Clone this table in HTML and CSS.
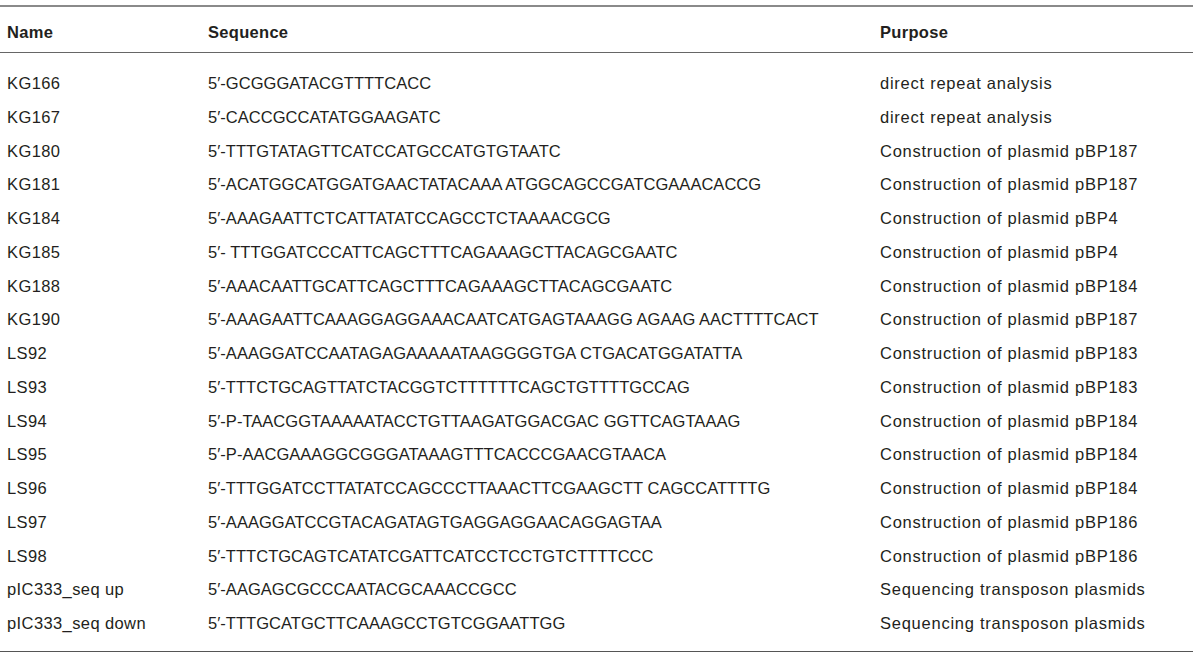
FILE: index.html
```html
<!DOCTYPE html>
<html>
<head>
<meta charset="utf-8">
<link rel="stylesheet" href="styles.css">
</head>
<body>
<div class="wrap">
<table class="primers">
<thead>
<tr><th class="c-name">Name</th><th class="c-seq">Sequence</th><th class="c-purpose">Purpose</th></tr>
</thead>
<tbody>
<tr class="first"><td>KG166</td><td>5′-GCGGGATACGTTTTCACC</td><td>direct repeat analysis</td></tr>
<tr><td>KG167</td><td>5′-CACCGCCATATGGAAGATC</td><td>direct repeat analysis</td></tr>
<tr><td>KG180</td><td>5′-TTTGTATAGTTCATCCATGCCATGTGTAATC</td><td>Construction of plasmid pBP187</td></tr>
<tr><td>KG181</td><td>5′-ACATGGCATGGATGAACTATACAAA ATGGCAGCCGATCGAAACACCG</td><td>Construction of plasmid pBP187</td></tr>
<tr><td>KG184</td><td>5′-AAAGAATTCTCATTATATCCAGCCTCTAAAACGCG</td><td>Construction of plasmid pBP4</td></tr>
<tr><td>KG185</td><td>5′- TTTGGATCCCATTCAGCTTTCAGAAAGCTTACAGCGAATC</td><td>Construction of plasmid pBP4</td></tr>
<tr><td>KG188</td><td>5′-AAACAATTGCATTCAGCTTTCAGAAAGCTTACAGCGAATC</td><td>Construction of plasmid pBP184</td></tr>
<tr><td>KG190</td><td>5′-AAAGAATTCAAAGGAGGAAACAATCATGAGTAAAGG AGAAG AACTTTTCACT</td><td>Construction of plasmid pBP187</td></tr>
<tr><td>LS92</td><td>5′-AAAGGATCCAATAGAGAAAAATAAGGGGTGA CTGACATGGATATTA</td><td>Construction of plasmid pBP183</td></tr>
<tr><td>LS93</td><td>5′-TTTCTGCAGTTATCTACGGTCTTTTTTCAGCTGTTTTGCCAG</td><td>Construction of plasmid pBP183</td></tr>
<tr><td>LS94</td><td>5′-P-TAACGGTAAAAATACCTGTTAAGATGGACGAC GGTTCAGTAAAG</td><td>Construction of plasmid pBP184</td></tr>
<tr><td>LS95</td><td>5′-P-AACGAAAGGCGGGATAAAGTTTCACCCGAACGTAACA</td><td>Construction of plasmid pBP184</td></tr>
<tr><td>LS96</td><td>5′-TTTGGATCCTTATATCCAGCCCTTAAACTTCGAAGCTT CAGCCATTTTG</td><td>Construction of plasmid pBP184</td></tr>
<tr><td>LS97</td><td>5′-AAAGGATCCGTACAGATAGTGAGGAGGAACAGGAGTAA</td><td>Construction of plasmid pBP186</td></tr>
<tr><td>LS98</td><td>5′-TTTCTGCAGTCATATCGATTCATCCTCCTGTCTTTTCCC</td><td>Construction of plasmid pBP186</td></tr>
<tr><td>pIC333_seq up</td><td>5′-AAGAGCGCCCAATACGCAAACCGCC</td><td>Sequencing transposon plasmids</td></tr>
<tr class="last"><td>pIC333_seq down</td><td>5′-TTTGCATGCTTCAAAGCCTGTCGGAATTGG</td><td>Sequencing transposon plasmids</td></tr>
</tbody>
</table>
</div>
</body>
</html>
```
FILE: styles.css
```css
html, body {
  margin: 0;
  padding: 0;
  background: #ffffff;
}
.wrap {
  padding-top: 5px;
  width: 1193px;
}
.primers {
  width: 100%;
  border-collapse: collapse;
  font-family: "Liberation Sans", Arial, sans-serif;
  font-size: 16.5px;
  color: #231f20;
  border-top: 2px solid #8a8a8a;
  border-bottom: 1px solid #555555;
  table-layout: fixed;
}
.primers th,
.primers td {
  text-align: left;
  padding: 0;
  white-space: nowrap;
}
.primers th {
  font-weight: bold;
  line-height: 20px;
  padding-top: 15px;
  padding-bottom: 10px;
  border-bottom: 1px solid #666666;
  letter-spacing: 0.3px;
}
.c-name { width: 208px; padding-left: 7px !important; box-sizing: border-box; }
.c-seq { width: 672px; }
.primers td {
  height: 33.75px;
  line-height: 33.75px;
}
.primers td:nth-child(1) { padding-left: 7px; letter-spacing: 0.4px; }
.primers td:nth-child(2) { letter-spacing: 0.03px; }
.primers td:nth-child(3) { letter-spacing: 0.75px; }
.primers tr.first td { padding-top: 14px; }
.primers tr.last td { padding-bottom: 10px; }
```
